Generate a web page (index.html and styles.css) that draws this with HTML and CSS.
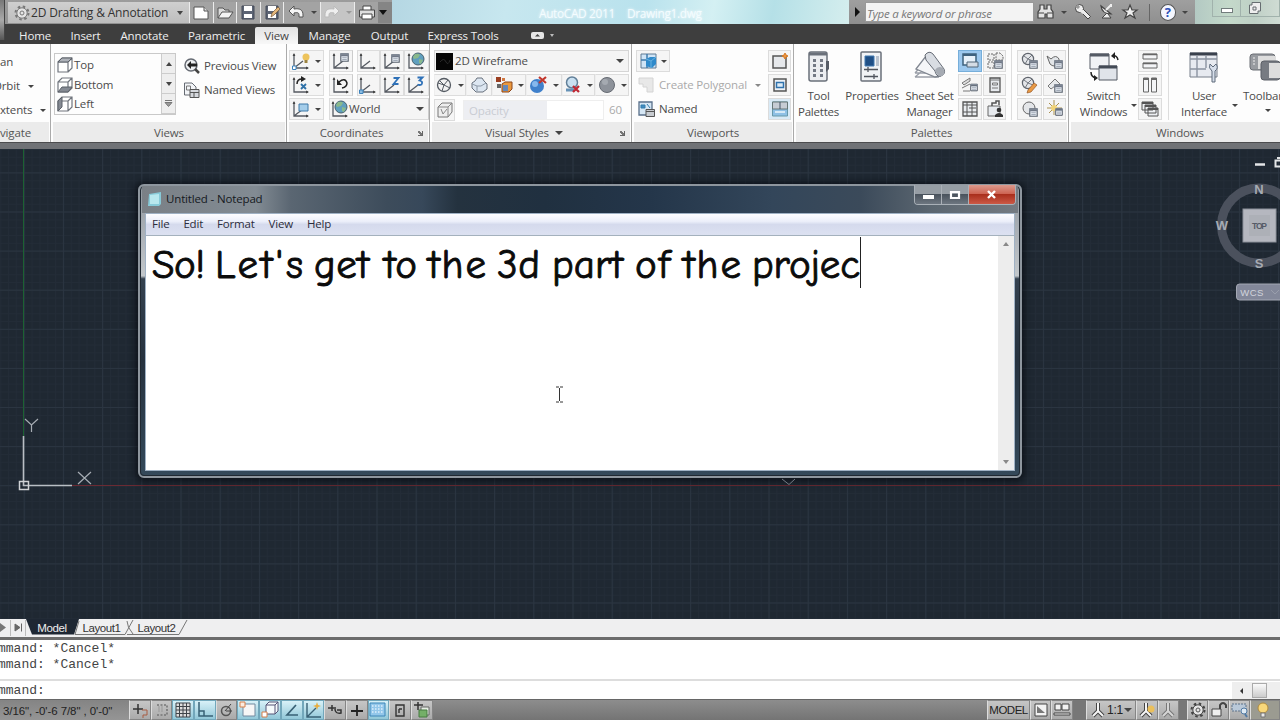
FILE: index.html
```html
<!DOCTYPE html>
<html lang="en">
<head>
<meta charset="utf-8">
<title>AutoCAD 2011</title>
<link rel="stylesheet" href="styles.css">
</head>
<body>
<svg class="defs" width="0" height="0">
  <defs>
    <symbol id="axis" viewBox="0 0 18 18"><path d="M2 2v14h14M2 16L11 9" fill="none" stroke="#555a62" stroke-width="1.3"/><path d="M0.6 4L2 1l1.4 3zM14 14.6l3 1.4-3 1.4z" fill="#444"/></symbol>
    <symbol id="axisb" viewBox="0 0 18 18"><path d="M2 2v14h14" fill="none" stroke="#555a62" stroke-width="1.3"/><path d="M0.6 4L2 1l1.4 3zM14 14.6l3 1.4-3 1.4z" fill="#444"/></symbol>
    <symbol id="globe" viewBox="0 0 14 14"><circle cx="7" cy="7" r="6" fill="#5f9fbe" stroke="#47606e"/><path d="M4 2q4-1 5 1l-2 3-4 1-1-2zM8 7l4 1-2 4-2-1z" fill="#8ab98b"/></symbol>
    <symbol id="sheet" viewBox="0 0 8 8"><path d="M.7.7h6.6v6.6H.7z" fill="#e9eef5" stroke="#59616d"/><path d="M.7 1h6.6v1.6H.7zM2 4.2h4M2 5.8h4" fill="#59616d" stroke="#8b95a3" stroke-width=".7"/></symbol>
    <symbol id="grey-globe" viewBox="0 0 18 18"><circle cx="7" cy="7" r="5.6" fill="#e4e6e9" stroke="#60656d" stroke-width="1.2"/><path d="M3 4l4 3 4-4M7 7l-3 5M7 7l5 2" fill="none" stroke="#747981"/></symbol>
  </defs>
</svg>

<header class="titlebar">
  <div class="qat">
    <div class="workspace">
      <svg width="18" height="18" viewBox="0 0 18 18"><circle cx="9" cy="9" r="6.500" fill="none" stroke="#777" stroke-width="2" stroke-dasharray="2.500 2.600"/><circle cx="9" cy="9" r="5.200" fill="#e4e4e4" stroke="#777"/><circle cx="9" cy="9" r="2" fill="none" stroke="#777"/></svg>
      <span class="ws-name">2D Drafting &amp; Annotation</span><i class="down"></i>
    </div>
    <span class="qb"><svg width="18" height="18"><path d="M2 3h10l4 4v8H2z" fill="#fff" stroke="#555"/><path d="M12 3v4h4" fill="#ddd" stroke="#555"/></svg></span>
    <span class="qb"><svg width="18" height="18"><path d="M2 14V4h5l2 2h4v3" fill="#ddd" stroke="#555"/><path d="M2 14l4-6h11l-4 6z" fill="#f4f4f4" stroke="#555"/></svg></span>
    <span class="qb"><svg width="18" height="18"><path d="M3 2h12v13H3z" fill="#5c6474" stroke="#444b58"/><path d="M5 2h8v5H5zM5 10h8v4H5z" fill="#fff"/></svg></span>
    <span class="qb"><svg width="18" height="18"><path d="M3 2h12v13H3z" fill="#5c6474" stroke="#444b58"/><path d="M5 2h8v5H5zM5 10h8v4H5z" fill="#fff"/><path d="M8 13l1-4 6-6 2 2-6 6z" fill="#e3b77c" stroke="#75583a" stroke-width=".7"/></svg></span>
    <span class="qb wide"><svg width="18" height="18"><path d="M2 7l5-5v3c6-1 9 1 9 6v2h-4v-2c0-2-1-3-5-2v3z" fill="#f5f5f5" stroke="#555"/></svg><i class="down tiny"></i></span>
    <span class="qb wide pale"><svg width="18" height="18"><path d="M16 7l-5-5v3c-6-1-9 1-9 6v2h4v-2c0-2 1-3 5-2v3z" fill="#eee" stroke="#bbb"/></svg><i class="down tiny faint"></i></span>
    <span class="qb print"><svg width="18" height="18"><path d="M5 6V2h8v4" fill="#fff" stroke="#444"/><path d="M1.500 6h15v7h-15z" fill="#ddd" stroke="#444"/><path d="M4 10h10v5H4z" fill="#fff" stroke="#444"/></svg></span>
    <span class="qend"><i class="down black"></i></span>
  </div>
  <div class="glass"><span class="apptitle">AutoCAD 2011</span><span class="apptitle">Drawing1.dwg</span></div>
  <div class="info">
    <i class="right"></i>
    <div class="search">Type a keyword or phrase</div>
    <svg class="binoc" width="18" height="18"><path d="M3 2h4v4h3V2h4v4l2 3v6h-6v-4H8v4H1V9l2-3z" fill="#e4e4e4" stroke="#444" stroke-width="1.2"/><path d="M1 10h6M10 10h6" stroke="#444"/></svg>
    <i class="down tiny dot"></i>
    <svg width="18" height="18"><circle cx="5.500" cy="5.500" r="4" fill="#eee" stroke="#444"/><path d="M7 9l7 7 2.500-2.500-7-7z" fill="#eee" stroke="#444"/><path d="M1 4l3 2 2-2-2-3z" fill="#999"/><path d="M5 6l5 4" stroke="#eee" stroke-width="3"/></svg>
    <svg class="sat" width="18" height="18"><path d="M3 3q1 8 10 8z" fill="#eee" stroke="#444" stroke-width="1.200"/><path d="M8 7l5-5M13 1v3" stroke="#eee" stroke-width="2"/><path d="M8 11l-4 4h9l-3-4" fill="#eee" stroke="#444"/></svg>
    <svg class="star" width="18" height="18"><path d="M9 2l2 5h5l-4 3 2 5-5-3-5 3 2-5-4-3h5z" fill="#eee" stroke="#444" stroke-width="1.2"/></svg>
    <i class="vline"></i>
    <span class="help">?</span>
    <i class="down tiny dot"></i>
  </div>
  <div class="caption"><span class="cbtn"><i class="minline"></i></span><span class="cbtn second"><svg width="14" height="14"><path d="M4 1.500h8.500V10H10v2.500H1.500V4H4z" fill="#eee" stroke="#666d70"/><path d="M5 6h3v3H5z" fill="none" stroke="#666d70"/></svg></span></div>
</header>

<nav class="tabs">
  <span class="t1">Home</span><span class="t2">Insert</span><span class="t3">Annotate</span><span class="t4">Parametric</span><span class="active">View</span><span class="t6">Manage</span><span class="t7">Output</span><span class="t8">Express Tools</span>
  <svg class="ribmode" width="28" height="10"><rect x="1" y="1" width="13" height="7" rx="2" fill="#e6e6e6"/><path d="M5 5.500L7.500 3l2.500 2.500z" fill="#444"/><path d="M20 3h4l-2 3z" fill="#bbb"/></svg>
  <i class="appbtn"></i>
</nav>

<main class="ribbon">
  <section class="panel nav-panel">
    <div class="rows"><div>an</div><div class="more">Orbit<i class="down tiny"></i></div><div class="more">xtents<i class="down tiny"></i></div></div>
    <footer>vigate</footer>
  </section>

  <section class="panel views">
    <div class="body">
      <div class="viewlist">
        <div class="items">
          <div><svg width="18" height="18"><path d="M2 6h10v10H2zM2 6l4-4h10v10l-4 4M12 6l4-4" fill="#fff" stroke="#70757d" stroke-width="1.200"/><path d="M2 6l4-4h10l-4 4z" fill="#aeb2b9" stroke="#5b6068"/></svg>Top</div>
          <div><svg width="18" height="18"><path d="M6 2h10v10l-4 4H2V6zM2 6h10v10M12 6l4-4" fill="#fff" stroke="#70757d" stroke-width="1.200"/><path d="M2 16l4-5h10l-4 5z" fill="#858a93" stroke="#5b6068"/></svg>Bottom</div>
          <div><svg width="18" height="18"><path d="M6 2h10v10l-4 4H2V6zM2 6h10v10M12 6l4-4" fill="#fff" stroke="#70757d" stroke-width="1.200"/><path d="M2 6l4-4v10l-4 4z" fill="#858a93" stroke="#5b6068"/></svg>Left</div>
        </div>
        <div class="spin"><b><i class="up"></i></b><b><i class="down"></i></b><b><svg width="9" height="9"><path d="M1 1.500h7M1 3.500h7l-3.500 4z" fill="#999" stroke="#777"/></svg></b></div>
      </div>
      <div class="viewcmds">
        <div><svg width="18" height="18"><circle cx="8" cy="8" r="6" fill="#eef0f2" stroke="#666b73" stroke-width="1.500"/><path d="M12 12l4 4" stroke="#444" stroke-width="2.500"/><path d="M4 8l4-4v2.500h6v3H8V12z" fill="#222"/></svg><span>Previous View</span></div>
        <div><svg width="18" height="18"><path d="M1.500 14V2H9l4 4v8z" fill="#f3f5f8" stroke="#666b73"/><path d="M3.500 5h4v4h-4z" fill="none" stroke="#777"/><path d="M7 8.500h9v8H7z" fill="#d5d8dd" stroke="#555"/><path d="M7 11.500h9M11 11v5" stroke="#555"/></svg><span>Named Views</span></div>
      </div>
    </div>
    <footer>Views</footer>
  </section>

  <section class="panel coords">
    <div class="coordgrid">
      <span class="btn drop"><svg width="19" height="18"><use href="#axis" width="18" height="18"/><circle cx="14" cy="5" r="3.500" fill="#edc35b"/><path d="M12.500 8h3v3h-3z" fill="#9c8441"/><path d="M.5 14h3.500v3.500H.5z" fill="#fff" stroke="#3d83bd"/></svg><i class="down tiny"></i></span>
      <span class="btn"><svg width="19" height="18"><use href="#axis" width="18" height="18"/><use href="#sheet" x="8" y="0" width="9" height="11"/></svg></span>
      <span class="btn"><svg width="19" height="18"><use href="#axis" width="18" height="18"/></svg></span>
      <span class="btn"><svg width="19" height="18"><use href="#axis" width="18" height="18"/><use href="#sheet" x="8" y="2" width="9" height="9"/></svg></span>
      <span class="btn"><svg width="19" height="18"><use href="#axisb" width="18" height="18"/><use href="#globe" x="4" y="0" width="14" height="14"/></svg></span>

      <span class="btn drop"><svg width="19" height="18"><use href="#axisb" width="18" height="18"/><path d="M5 8q0-5 5-5" fill="none" stroke="#222" stroke-width="1.500"/><path d="M9 0l5 3-5 3z" fill="#222"/><path d="M9 8l5 5M14 8l-5 5" stroke="#2e71a8" stroke-width="1.800"/></svg><i class="down tiny"></i></span>
      <span class="btn"><svg width="19" height="18"><use href="#axisb" width="18" height="18"/><path d="M7 6q6-5 8 1 0 4-5 5" fill="none" stroke="#222" stroke-width="1.500"/><path d="M5 3v6h5z" fill="#222"/></svg></span>
      <span class="btn"><svg width="19" height="18"><use href="#axis" width="18" height="18"/><path d="M.5 14h3.500v3.500H.5z" fill="#8dbce0" stroke="#3d83bd"/></svg></span>
      <span class="btn"><svg width="19" height="18"><use href="#axis" width="18" height="18"/><path d="M10.500 2h5l-5 6h5" fill="none" stroke="#2e71b8" stroke-width="1.800"/></svg></span>
      <span class="btn"><svg width="19" height="18"><use href="#axis" width="18" height="18"/><path d="M10.500 1.500h5l-3 3q4 1 2 4-2 1-4 0" fill="none" stroke="#2e71b8" stroke-width="1.800"/></svg></span>

      <span class="btn drop"><svg width="19" height="18"><use href="#axis" width="18" height="18"/><path d="M7 4h9v7H7z" fill="#a4cdea" stroke="#3d78a8"/></svg><i class="down tiny"></i></span>
      <span class="btn world"><svg width="18" height="18"><use href="#axisb" width="18" height="18"/><use href="#globe" x="3" y="0" width="14" height="14"/></svg>World<i class="down"></i></span>
    </div>
    <footer class="with-launch">Coordinates<i class="launch"></i></footer>
  </section>

  <section class="panel visual">
    <div class="rows">
      <div class="combo"><svg width="17" height="17"><path d="M0 0h17v17H0z" fill="#050505"/><path d="M4 9q4-5 6 0 2 4 4-2" fill="none" stroke="#292929"/></svg><span>2D Wireframe</span><i class="down"></i></div>
      <div class="tools">
        <span class="btn"><svg width="17" height="18"><circle cx="8" cy="9" r="6.500" fill="#f3f3f3" stroke="#555b63" stroke-width="1.300"/><path d="M2 7l6 2 4-5M8 9l-2 6M8 9l6 3M4 5l4 4" fill="none" stroke="#555b63"/></svg><i class="down tiny"></i></span>
        <span class="btn"><svg width="18" height="18"><path d="M2 7l3-2 2-3h5l2 3 3 3v5l-4 3H6l-4-4z" fill="#dce6f1" stroke="#68717d"/><path d="M2 8l5 2 4 0 5-3M7 10v5" fill="none" stroke="#8c98a6"/></svg></span>
        <span class="btn"><svg width="18" height="18"><path d="M1 1h5v5H1z" fill="#9b3e20"/><path d="M7 2h3v3H7z" fill="#d17841"/><path d="M2 8h4v4H2z" fill="#666"/><path d="M7 8l3-2h7v7l-3 3H7z" fill="#eb993e" stroke="#8b461c"/><path d="M8 9h5v6H8z" fill="#6588b8"/></svg><i class="down tiny"></i></span>
        <span class="btn"><svg width="19" height="18"><circle cx="8" cy="10" r="7" fill="#3f80cb"/><circle cx="6" cy="8" r="3" fill="#87b8ed"/><path d="M10 1l7 6M17 1l-7 6" stroke="#c2372d" stroke-width="2.200"/></svg><i class="down tiny"></i></span>
        <span class="btn"><svg width="18" height="18"><circle cx="8" cy="6.500" r="5.500" fill="#c9e0f1" stroke="#617f98" stroke-width="1.500"/><path d="M2 14h8" stroke="#6692b7" stroke-width="3"/><path d="M9 10l6 6M15 10l-6 6" stroke="#be2833" stroke-width="2.300"/></svg><i class="down tiny"></i></span>
        <span class="btn"><svg width="18" height="18"><circle cx="9" cy="9" r="7.500" fill="#8d929a" stroke="#666b73"/><circle cx="7" cy="6" r="3" fill="#a5aab1"/></svg><i class="down tiny"></i></span>
      </div>
      <div class="opacity"><span class="btn"><svg width="18" height="18"><path d="M2 6l4-4h10v9l-4 5H2z" fill="#eee" stroke="#777"/><path d="M2 6h10v10M12 6l4-4M5 8l2 5 4-5" fill="none" stroke="#888"/></svg></span><div class="slider">Opacity</div><span class="num">60</span></div>
    </div>
    <footer class="with-launch"><span>Visual Styles</span><i class="down vsdown"></i><i class="launch"></i></footer>
  </section>

  <section class="panel viewports">
    <div class="body">
      <div class="rows vpleft">
        <div><span class="btn"><svg width="18" height="18"><path d="M1 2h15v14H1z" fill="#cfe4f6" stroke="#5e7a94"/><path d="M1 8h6M7 2v14" stroke="#3f79ab" stroke-width="1.500"/><path d="M6 7l4-2h6v7l-4 4-6-2z" fill="#2f8acb"/><path d="M6 7l5 2 5-4M11 9v7" fill="none" stroke="#67b1e0"/></svg><i class="down tiny"></i></span></div>
        <div class="disabled"><svg width="18" height="18"><path d="M1 2h14v14H9v-5H5V8H1z" fill="#e8e8e8" stroke="#d4d4d4"/></svg><span class="cpoly">Create Polygonal</span><i class="down tiny"></i></div>
        <div><svg width="18" height="18"><path d="M1 2h13v13H1z" fill="#d6e7f5" stroke="#59708a" stroke-width="1.300"/><path d="M3 5h4v3H3zM9 4l3 4" fill="#428bc1" stroke="#337eae"/><path d="M8 9.500h8.500v7H8z" fill="#c8ccd1" stroke="#555"/><path d="M8 11.500h8" stroke="#555"/></svg><span>Named</span></div>
      </div>
      <div class="rows vpright">
        <span class="btn"><svg width="18" height="18"><path d="M2 4h13v12H2z" fill="#e6e8eb" stroke="#555" stroke-width="1.500"/><path d="M14 1l1 2 2 1-2 1-1 2-1-2-2-1 2-1z" fill="#ed953e" stroke="#d77a24"/></svg></span>
        <span class="btn"><svg width="18" height="18"><path d="M3 3h12v12H3z" fill="#edf2f7" stroke="#555" stroke-width="1.500"/><path d="M5.500 6.500h7v5h-7z" fill="#dcebf6" stroke="#2f72ad" stroke-width="1.500"/></svg></span>
        <span class="btn sel"><svg width="18" height="18"><path d="M1.500 2h15v14h-15z" fill="#8fc1e6" stroke="#69a"/><path d="M1.500 2h15v7h-15z" fill="#c6ccd4" stroke="#677"/><path d="M9 2v7" stroke="#456"/><path d="M4 12h10" stroke="#d6e9f6" stroke-width="2"/></svg></span>
      </div>
    </div>
    <footer>Viewports</footer>
  </section>

  <section class="panel palettes">
    <div class="body">
      <div class="big p1"><svg width="28" height="32"><rect x="4" y="1" width="18" height="29" rx="2" fill="#eceef1" stroke="#6a707a" stroke-width="1.500"/><path d="M4 3h18" stroke="#6a707a" stroke-width="3"/><g fill="#737984"><path d="M8 8h3v3H8zM15 8h3v3h-3zM8 13h3v3H8zM15 13h3v3h-3zM8 18h3v3H8zM15 18h3v3h-3zM8 23h3v3H8zM15 23h3v3h-3z"/></g><path d="M21 10h3v8l-3 3z" fill="#555b65"/></svg><span>Tool<br>Palettes</span></div>
      <div class="big p2"><svg width="28" height="32"><rect x="3" y="1" width="20" height="29" rx="1" fill="#f1f3f6" stroke="#6a707a" stroke-width="1.500"/><path d="M7 5h9v10H7z" fill="#1f4f86" stroke="#427bb1"/><path d="M18 5h3v10h-3z" fill="#b9c2ce"/><path d="M6 18.500h14M6 25.500h14M10 16v5M16 23v5" stroke="#50555e" stroke-width="1.300"/></svg><span>Properties</span></div>
      <div class="big p3"><svg width="34" height="32"><path d="M2 26h24M2 22h20M2 26l6-5M2 22l8-9" fill="none" stroke="#9a9fa8" stroke-width="1.300"/><path d="M3 18l10-13 14 20-5 1z" fill="#f5f6f8" stroke="#818791" stroke-width="1.300"/><path d="M12 4q4-5 8-1l11 15q2 5-3 7-5 1-6-5L13 9z" fill="#d9dde3" stroke="#666c76"/><path d="M22 19q3-5 8-2 3 5-1 8-6 0-7-6" fill="#a6abb3"/></svg><span>Sheet Set<br>Manager</span></div>
      <div class="pgrid">
        <span class="btn on"><svg width="18" height="18"><path d="M2 2h13v11H2z" fill="#e7f1fa" stroke="#3e617e" stroke-width="1.500"/><path d="M2 3h13" stroke="#3e617e" stroke-width="2"/><path d="M6 10h11v5H6z" fill="#d4dce5" stroke="#526679"/></svg></span>
        <span class="btn"><svg width="18" height="18"><path d="M2 2h6v6H2zM2 10h6v6H2zM10 1h4l3 3v4h-7z" fill="#eee" stroke="#666" stroke-dasharray="2 1"/><use href="#sheet" x="8" y="8" width="9" height="9"/></svg></span>
        <span class="btn"><svg width="18" height="18"><path d="M1 7l8-5v3L3 9zM1 12l8-4M2 15h7" fill="#ddd" stroke="#777"/><use href="#sheet" x="9" y="6" width="8" height="11"/></svg></span>
        <span class="btn"><svg width="18" height="18"><path d="M4 2h10v14H4z" fill="#e7eaee" stroke="#555" stroke-width="1.300"/><path d="M4 4h10M6.500 7h5v2h-5zM6 12h6" fill="none" stroke="#777"/></svg></span>
        <span class="btn"><svg width="18" height="18"><path d="M2 2h14v14H2z" fill="#e9ecef" stroke="#555" stroke-width="1.300"/><path d="M2 5h14M6 2v14M11 2v14M2 12h14M8 8h7" stroke="#555"/></svg></span>
        <span class="btn"><svg width="18" height="18"><path d="M2 6h12v10H2z" fill="#e7eaee" stroke="#666"/><path d="M6 6V3h4V1h3v4" fill="none" stroke="#555" stroke-width="1.500"/><circle cx="13" cy="10" r="2.300" fill="#333"/><path d="M9 17v-2q4-4 8 0v2z" fill="#333"/></svg></span>
      </div>
      <div class="pgrid second">
        <span class="btn"><svg width="18" height="18"><use href="#grey-globe" width="18" height="18"/><use href="#sheet" x="8" y="8" width="9" height="9"/></svg></span>
        <span class="btn"><svg width="18" height="18"><path d="M1 4l4 3q5-5 8 0v5q-5 4-9 0z" fill="#e2e5e8" stroke="#666"/><use href="#sheet" x="8" y="8" width="9" height="9"/></svg></span>
        <span class="btn"><svg width="18" height="18"><use href="#grey-globe" width="18" height="18"/><path d="M7 14l6-7 3 2-6 7-4 1z" fill="#e99a45" stroke="#965826" stroke-width=".7"/></svg></span>
        <span class="btn"><svg width="18" height="18"><path d="M2 10l7-7 5 5-3 2M2 10l3 3 4-3" fill="#e8eaec" stroke="#777"/><use href="#sheet" x="8" y="8" width="9" height="9"/></svg></span>
        <span class="btn"><svg width="18" height="18"><circle cx="8" cy="8" r="6" fill="#e4e6e9" stroke="#666"/><use href="#sheet" x="8" y="8" width="9" height="9"/></svg></span>
        <span class="btn"><svg width="18" height="18"><path d="M8 0v15M1 8h15M3 3l10 10M13 3L3 13" stroke="#a99150"/><circle cx="8" cy="8" r="3" fill="#f1d377"/><use href="#sheet" x="9" y="7" width="8" height="10"/></svg></span>
      </div>
    </div>
    <footer>Palettes</footer>
  </section>

  <section class="panel windows">
    <div class="body">
      <div class="big w1"><svg width="34" height="32"><path d="M3 3h19v15H3z" fill="#f0f2f5" stroke="#555b65"/><path d="M3 4h19" stroke="#555b65" stroke-width="3"/><path d="M12 15h18v14H12z" fill="#e0e4ea" stroke="#555b65"/><path d="M12 16h18" stroke="#444b56" stroke-width="3"/><path d="M26 5q4-1 5 4M4 21q0 5 5 6" fill="none" stroke="#222" stroke-width="1.500"/><path d="M28 1l-4 4 4 3zM7 24l4 3-4 3z" fill="#222"/></svg><span>Switch<br>Windows</span><i class="down tiny corner"></i></div>
      <div class="wcol">
        <span class="btn"><svg width="18" height="18"><path d="M2 2h14v5H2zM2 11h14v5H2z" fill="#f4f5f7" stroke="#666"/><path d="M2 2.500h14M2 11.500h14" stroke="#666" stroke-width="1.600"/></svg></span>
        <span class="btn"><svg width="18" height="18"><path d="M2.500 2h5v14h-5zM10.500 2h5v14h-5z" fill="#f4f5f7" stroke="#666"/><path d="M2.500 3h5M10.500 3h5" stroke="#666" stroke-width="2"/></svg></span>
        <span class="btn"><svg width="18" height="18"><path d="M1 2h11v8H1zM4 5h11v8H4zM7 8h10v8H7z" fill="#eef0f3" stroke="#555"/><path d="M1 3h11M4 6h11M7 9h10" stroke="#555" stroke-width="2"/></svg></span>
      </div>
      <div class="big w2"><svg width="34" height="32"><path d="M3 2h27v24H3z" fill="#e7eaf0" stroke="#777e8a"/><path d="M3 3h27" stroke="#3a414d" stroke-width="3"/><path d="M3 8h27M10 5v21M19 5v12M3 18h16" stroke="#8b93a0" stroke-width="1.400"/><path d="M25 31v-11q-4-3-2-7l3 3 3-3q3 4-1 7v11z" fill="#d6deea" stroke="#5e6a7b"/></svg><span>User<br>Interface</span><i class="down tiny corner"></i></div>
      <div class="big w3"><svg width="34" height="32"><rect x="3" y="3" width="25" height="16" rx="3" fill="#989ba0" stroke="#6b6e74"/><path d="M11 5h18v13H11z" fill="#ddd"/><path d="M6 7h2M6 10h2M6 13h2" stroke="#eee"/><rect x="14" y="10" width="19" height="19" rx="3" fill="#777b82" stroke="#5b5f66"/><path d="M22 12h12v15H22z" fill="#ddd"/></svg><span>Toolbars</span><i class="down tiny"></i></div>
    </div>
    <footer>Windows</footer>
  </section>
</main>

<div class="drawing">
  <svg class="grid" width="1280" height="470">
    <defs>
      <pattern id="minor" x="23.7" y="23.5" width="7.84" height="7.82" patternUnits="userSpaceOnUse"><path d="M0 .5H8M.5 0V8" stroke="#232c37"/></pattern>
      <pattern id="major" x="23.7" y="23.4" width="39.2" height="39.1" patternUnits="userSpaceOnUse"><path d="M0 .5H40M.5 0V40" stroke="#2b3541"/></pattern>
    </defs>
    <rect width="1280" height="470" fill="url(#minor)"/><rect width="1280" height="470" fill="url(#major)"/>
    <path d="M23.500 0v288" stroke="#1c6232"/><path d="M72 336.500h1208" stroke="#6b2a33"/>
    <path d="M23.500 287v49.500H72" fill="none" stroke="#b9bec4" stroke-width="1.600"/><path d="M19.500 332.500h9v8h-9z" fill="none" stroke="#d0d3d6" stroke-width="1.500"/>
    <path d="M25 270l6.500 6 6.500-6M31.500 276v7M78 323l13 12M91 323l-13 12" fill="none" stroke="#a6acb3" stroke-width="1.200"/>
    <circle cx="1259" cy="76.500" r="37.500" fill="none" stroke="#4b515d" stroke-width="9"/>
    <rect x="1243" y="60" width="33" height="33" fill="#b5b7bf" stroke="#8e929b"/><rect x="1249" y="66" width="21" height="21" fill="#adb0b7"/>
    <path d="M1255 15.500h10" stroke="#e4e6e8" stroke-width="2.500"/><path d="M1275.500 11.500h6v6h-6zM1277 9h4" fill="none" stroke="#e4e6e8" stroke-width="2"/>
    <rect x="1236.500" y="135" width="50" height="16" rx="3" fill="#83889a" stroke="#a4a8b4"/><path d="M1271 141l4 4 4-4" fill="none" stroke="#999eac"/>
    <g class="cube"><text x="1259" y="45">N</text><text x="1222" y="81">W</text><text x="1259" y="119">S</text><text class="top" x="1259.500" y="80" textLength="15">TOP</text><text class="wcs" x="1252" y="147">WCS</text></g>
  </svg>

  <div class="notepad">
    <div class="np-title"><svg width="16" height="16"><path d="M2 3l12-2v12l-2 2H1z" fill="#88cbd9"/><path d="M3 4l9-1v10H3z" fill="#b9e8ee"/></svg><span>Untitled - Notepad</span>
      <div class="np-btns"><b><i></i></b><b><svg width="12" height="10"><path d="M2 2h8v6H2z" fill="none" stroke="#fff" stroke-width="2.200"/></svg></b><b class="close"><svg width="12" height="12"><path d="M2 2l7 7M9 2L2 9" stroke="#fff" stroke-width="2.400"/></svg></b></div>
    </div>
    <div class="np-inner">
      <div class="np-menu"><span>File</span><span>Edit</span><span>Format</span><span>View</span><span>Help</span></div>
      <div class="np-body">
        <svg class="np-text" width="852" height="234">
          <text y="42"><tspan x="6" textLength="53">So!</tspan> <tspan x="69" textLength="88">Let's</tspan> <tspan x="168" textLength="55">get</tspan> <tspan x="238" textLength="33">to</tspan> <tspan x="282" textLength="58">the</tspan> <tspan x="351" textLength="43">3d</tspan> <tspan x="406" textLength="71">part</tspan> <tspan x="489" textLength="35">of</tspan> <tspan x="537" textLength="58">the</tspan> <tspan x="606" textLength="108">projec</tspan></text>
          <path d="M714.500 1v51" stroke="#222"/>
          <path d="M410 151h3M414 151h3M413.500 152v13M410 166h3M414 166h3" stroke="#333" fill="none"/>
        </svg>
        <div class="np-scroll"><i class="up"></i><i class="down"></i></div>
      </div>
    </div>
  </div>
  <svg class="cursor-tip" width="16" height="8"><path d="M1 1l7 5.500L14 1" fill="none" stroke="#747b84"/></svg>
</div>

<div class="layouts">
  <svg width="200" height="18"><path d="M0 4l6 4.500L0 13z" fill="#777"/><path d="M10.500 1v16M25.500 1v16" stroke="#bbb"/><path d="M15 5l5 3.500-5 3.500zM21.500 4.500v8" fill="#666" stroke="#666"/><path d="M26 0l6 15.500h42L79 0z" fill="#1e2733"/><path d="M79 2l-4 13.500h50L133 1M127 15.500h52L187 1M127 2q0 6 6 13" fill="none" stroke="#777"/>
  <g><text class="lm" x="52" y="12.500">Model</text><text x="101.500" y="12.500" textLength="38">Layout1</text><text x="156.500" y="12.500" textLength="38">Layout2</text></g></svg>
</div>
<div class="command"><div class="history"><p>mmand: *Cancel*</p><p>mmand: *Cancel*</p></div><div class="prompt"><p>mmand:</p><div class="hscroll"><i class="left"></i><b></b></div></div></div>

<footer class="status">
  <div class="readout">3/16", -0'-6 7/8" , 0'-0"</div>
  <div class="toggles">
    <span><svg width="18" height="18"><path d="M2 8h10M7 3v10" stroke="#333" stroke-width="1.500"/><path d="M11 9h5v5h-4v3" fill="none" stroke="#a85c42"/></svg></span>
    <span><svg width="18" height="18"><path d="M4 4h10v10H4" fill="none" stroke="#777" stroke-width="1.600" stroke-dasharray="2 1.500"/><path d="M6 5v6M9 5v6" stroke="#999"/></svg></span>
    <span class="lit"><svg width="18" height="18"><path d="M2 2h14v14H2zM5.500 2v14M9 2v14M12.500 2v14M2 5.500h14M2 9h14M2 12.500h14" fill="#ddd" stroke="#3e4348"/></svg></span>
    <span class="lit"><svg width="18" height="18"><path d="M3 1v14h14M3 10h5v5" fill="none" stroke="#396175" stroke-width="1.500"/></svg></span>
    <span><svg width="18" height="18"><circle cx="8" cy="10" r="4.500" fill="none" stroke="#555" stroke-width="1.500"/><path d="M7 10l6-7M8 10h6" stroke="#444"/></svg></span>
    <span class="lit"><svg width="18" height="18"><path d="M4 3h12v12H4z" fill="#f6f6f6" stroke="#738aa0"/><path d="M1 1h5v5H1z" fill="#fbece0" stroke="#d6804d"/></svg></span>
    <span class="lit"><svg width="18" height="18"><path d="M5 4l3-3h9v9l-3 3H5zM5 4h9v9M14 4l3-3" fill="#f5fafc" stroke="#557"/><path d="M1 11h5v5H1z" fill="#fff" stroke="#d6804d"/></svg></span>
    <span class="lit"><svg width="18" height="18"><path d="M13 4L4 14h11" fill="none" stroke="#396175" stroke-width="1.700"/></svg></span>
    <span class="lit"><svg width="18" height="18"><path d="M3 2v14h14M3 16l9-9" fill="none" stroke="#396175" stroke-width="1.400"/><path d="M13 1l1 3 3 1-3 1-1 3-1-3-3-1 3-1z" fill="#e9ae3e"/></svg></span>
    <span><svg width="18" height="18"><path d="M2 7h8M6 4v6M9 8q0 5 6 4v-3h-4" fill="none" stroke="#333" stroke-width="1.500"/></svg></span>
    <span><svg width="18" height="18"><path d="M3 10h12M9 4v11" stroke="#222" stroke-width="1.800"/></svg></span>
    <span class="lit"><svg width="18" height="18"><path d="M1 2h15v13H1z" fill="#93c7ea" stroke="#3d86b8"/><path d="M3 5h11M3 8h11M3 11h11" stroke="#def0fb" stroke-width="1.500" stroke-dasharray="1.500 1.500"/></svg></span>
    <span><svg width="18" height="18"><path d="M5 4h8v11H5zM8 8h3M8 8v4" fill="none" stroke="#333" stroke-width="1.400"/></svg></span>
    <span><svg width="18" height="18"><path d="M1 4h9M5 1v8" stroke="#333" stroke-width="1.500"/><path d="M8 6h8v8H8z" fill="#e5ede3" stroke="#666"/><path d="M6 9h8v7H6z" fill="#74af68" stroke="#477b40"/></svg></span>
  </div>
  <div class="status-right">
    <span class="model">MODEL</span>
    <span class="s21"><svg width="18" height="18"><path d="M3 3h12v12H3z" fill="#f2f2f2" stroke="#444"/><path d="M5 5v7h8z" fill="#777"/></svg></span>
    <span class="s22"><svg width="18" height="18"><path d="M2 3h6v6H2zM9 3h7v6H9zM1 12h16v2H1z" fill="#f2f2f2" stroke="#444"/></svg></span>
    <i class="dark13"></i>
    <span class="scale"><svg width="16" height="18"><path d="M8 2v8L3 15M8 10l5 5" fill="none" stroke="#444" stroke-width="4"/><path d="M8 2v8L3 15M8 10l5 5" fill="none" stroke="#f5f5f5" stroke-width="2"/></svg>1:1<i class="down"></i></span>
    <span class="s22"><svg width="18" height="18"><path d="M8 2v8L3 15M8 10l5 5" fill="none" stroke="#444" stroke-width="4"/><path d="M8 2v8L3 15M8 10l5 5" fill="none" stroke="#f5f5f5" stroke-width="2"/><circle cx="13" cy="8" r="3.500" fill="#ebc05b"/></svg></span>
    <span class="s21"><svg width="18" height="18"><path d="M8 2v8L3 15M8 10l5 5" fill="none" stroke="#777" stroke-width="4"/><path d="M8 2v8L3 15M8 10l5 5" fill="none" stroke="#d5d5d5" stroke-width="2"/></svg></span>
    <i class="dark8"></i>
    <span class="s21"><svg width="18" height="18"><circle cx="9" cy="9" r="6.500" fill="none" stroke="#444" stroke-width="2" stroke-dasharray="2.500 2.600"/><circle cx="9" cy="9" r="5.200" fill="#e6e6e6" stroke="#444"/><circle cx="9" cy="9" r="2" fill="none" stroke="#555"/></svg></span>
    <span class="s21"><svg width="18" height="18"><path d="M2 8h9v7H2z" fill="#eee" stroke="#444"/><path d="M10 8V4q3-4 6 0v3" fill="none" stroke="#444" stroke-width="2"/></svg></span>
    <span class="s21"><svg width="18" height="18"><path d="M1 3h14v7H1z" fill="#b9c8d8" stroke="#5f7389" stroke-dasharray="2 1"/><circle cx="13" cy="10" r="3" fill="#dfeaf4" stroke="#527aa3"/><path d="M14 13l2 3" stroke="#527aa3" stroke-width="2"/></svg></span>
    <span class="bulb"><svg width="18" height="18"><circle cx="9" cy="7" r="5" fill="#f8d77a" stroke="#b08b3e"/><path d="M7 12h4v4H7z" fill="#e8e8e8" stroke="#777"/></svg></span>
  </div>
</footer>
</body>
</html>
```
FILE: styles.css
```css
* { box-sizing: border-box; }
html { overflow: hidden; }
body { margin: 0; width: 1280px; height: 720px; overflow: hidden; display: flex; flex-direction: column; background: #1f2833; font: 11.5px/16px "Open Sans", "Noto Sans", sans-serif; color: #4b4b4b; letter-spacing: -0.15px; }
svg { flex: none; display: block; }
p { margin: 0; }
i { font-style: normal; flex: none; }
.defs { position: absolute; }

.down, .up { display: block; width: 0; height: 0; border: 4px solid transparent; border-bottom: 0; border-top-color: #444; }
.up { border: 4px solid transparent; border-top: 0; border-bottom-color: #444; }
.tiny { border-width: 3px; border-bottom: 0; }
.black { border-width: 5px 4px 0; border-top-color: #111; }
.faint { border-top-color: #999; }
.right { border: 5px solid transparent; border-left-color: #111; border-right: 0; }
.left { border: 3px solid transparent; border-right-color: #333; border-left: 0; }

/* title bar */
.titlebar { flex: none; height: 24px; display: flex; background: #9c9c9c; overflow: hidden; }
.qat { width: 392px; flex: none; display: flex; background: linear-gradient(#9c9c9c, #929292); padding: 2px 0 1px 8px; }
.workspace { width: 181px; display: flex; align-items: center; background: linear-gradient(#cfcfcf, #bdbdbd); padding-left: 5px; }
.ws-name { width: 146px; color: #333; font-size: 12px; letter-spacing: -0.18px; white-space: nowrap; padding-top: 1px; }
.workspace .down { border-width: 4px 3px 0; }
.qb { width: 23.500px; display: flex; align-items: center; justify-content: center; background: #a3a3a3; border-left: 1px solid #ececec; }
.qb.wide { width: 37px; justify-content: space-around; }
.qb.wide.pale { width: 34px; background: #c5c5c5; }
.qb.print { width: 24px; }
.qend { flex: 1; background: #858585; display: flex; align-items: center; padding-left: 1px; }
.glass { width: 457px; display: flex; align-items: center; gap: 12px; padding-left: 147px; background: linear-gradient(100deg, #b5d7e3 0%, #c7e7ef 25%, #b9e2ed 55%, #d4f0f3 70%, #b5e0e7 83%, #d5eeee 100%); }
.apptitle { color: #f4fcff; font-size: 11.800px; letter-spacing: -0.3px; padding-top: 2px; text-shadow: 0 0 3px #fff; }
.info { width: 346px; flex: none; display: flex; align-items: center; padding-left: 6px; background: linear-gradient(#9f9f9f, #8f8f8f); }
.search { margin-left: 5px; width: 176px; height: 20px; background: #f3f3f3; border: 1px solid #999; padding: 2px 0 0 1px; font-style: italic; line-height: 18px; color: #777; letter-spacing: -0.24px; white-space: nowrap; }
.binoc { margin-left: 3px; }
.dot { margin: 0 7px 0 6px; }
.sat { margin-left: 6px; }
.star { margin-left: 5px; }
.vline { width: 1px; height: 17px; background: #666; margin: 0 10px 0 10px; }
.help { width: 17px; height: 17px; border-radius: 50%; background: #f5f7ff; border: 1px solid #555; color: #2c50b8; font-weight: bold; font-size: 13px; line-height: 15px; text-align: center; }
.caption { flex: 1; display: flex; padding-left: 17px; background: linear-gradient(90deg, #b3c9c3, #c4d9ca 40%, #bfd0c6 70%, #d0dcd4); }
.cbtn { width: 29px; height: 17px; border: 1px solid #a1b2ac; border-top: 0; display: flex; align-items: center; justify-content: center; }
.cbtn.second { flex: 1; border-left: 0; padding-right: 10px; }
.minline { width: 12px; height: 5px; border: 1px solid #727c7c; background: #fff; margin-top: 4px; }

/* ribbon tabs */
.tabs { flex: none; height: 20px; display: flex; background: #3e3e3e; color: #eee; line-height: 17px; padding: 3px 0 0 5px; position: relative; white-space: nowrap; }
.tabs span { text-align: center; flex: none; height: 17px; }
.t1 { width: 60px; } .t2 { width: 41px; } .t3 { width: 77px; } .t4 { width: 67px; }
.tabs .active { width: 43px; margin: 0 0 0 5px; background: linear-gradient(#e2e2e2, #f8f8f8); color: #444; border-radius: 2px 2px 0 0; }
.t6 { width: 63px; } .t7 { width: 57px; } .t8 { width: 90px; }
.ribmode { margin: 4px 0 0 22px; }
.appbtn { position: absolute; left: 0; top: -24px; width: 5px; height: 40px; background: linear-gradient(#777, #aaa 50%, #555); border-right: 1px solid #444; }

/* ribbon */
.ribbon { flex: none; height: 105px; display: flex; overflow: hidden; background: #fdfdfd; border-bottom: 6px solid #707276; box-shadow: inset 0 -1px #4c4c4e; }
.panel { flex: none; height: 98px; border-right: 1px solid #aaa; display: flex; flex-direction: column; overflow: hidden; white-space: nowrap; }
.panel > footer { flex: none; height: 20px; margin: auto 1px 0 2px; background: #ebebeb; display: flex; align-items: center; justify-content: center; position: relative; color: #555; padding-top: 1px; }
.panel > .with-launch { padding-right: 14px; }
.body { display: flex; }
.rows { display: grid; grid-template-rows: repeat(3, 22px); row-gap: 2px; padding-top: 6px; align-items: center; }
.rows > div { display: flex; align-items: center; }
.btn { height: 22px; display: flex; align-items: center; justify-content: center; background: #f5f5f5; border: 1px solid #dcdcdc; gap: 4px; }
.launch { position: absolute; right: 5px; bottom: 6px; width: 5px; height: 5px; border-right: 1px solid #666; border-bottom: 1px solid #666; background: linear-gradient(45deg, transparent 35%, #777 35% 65%, transparent 65%); }

.nav-panel { width: 51px; }
.nav-panel > footer { justify-content: flex-start; margin-left: 0; }
.nav-panel .rows > div { height: 22px; padding-top: 2px; }
.nav-panel .more { gap: 8px; }
.nav-panel .more:nth-child(2) { margin-left: -7px; }
.nav-panel .more:nth-child(3) { margin-left: 0; }

.views { width: 236px; }
.viewlist { width: 122px; height: 62px; margin: 9px 0 0 3px; border: 1px solid #c9c9c9; display: flex; }
.items { width: 106px; padding: 1px 0 0 1px; }
.items div { height: 19.500px; display: flex; align-items: center; gap: 0; padding-top: 1px; }
.spin { flex: 1; display: flex; flex-direction: column; }
.spin b { flex: 1; background: #eee; border-left: 1px solid #ccc; border-bottom: 1px solid #ccc; display: flex; align-items: center; justify-content: center; }
.spin .down, .spin .up { border-left-width: 3px; border-right-width: 3px; }
.viewcmds { padding: 10px 0 0 7px; display: grid; grid-template-rows: 24px 24px; }
.viewcmds div { display: flex; align-items: center; gap: 3px; }

.coords { width: 143px; }
.coordgrid { display: grid; grid-template: repeat(3, 22px) / 35px 29px 27px 24px 25px; gap: 2px 0; padding: 6px 0 0 2px; width: 143px; }
.coordgrid .btn:nth-child(5n+2) { margin-left: 5px; border-right-color: #ccc; }
.coordgrid .btn:nth-child(5n+3) { margin-left: 4px; }
.coordgrid .world { grid-column: 2 / -1; justify-content: flex-start; gap: 0; padding-left: 1px; }
.world .down { margin: 0 4px 0 auto; }

.visual { width: 202px; }
.visual .rows { padding-left: 4px; }
.combo { width: 195px; height: 22px; background: #f4f4f4; border: 1px solid #d5d5d5; gap: 2px; padding: 0 4px 0 1px; }
.combo .down { margin-left: auto; }
.tools { width: 195px; display: grid !important; grid-template-columns: 32px 26px 34px 36px 33px 34px; }
.tools .btn { gap: 5px; border-left-color: #eee; }
.opacity { padding-top: 2px; }
.opacity .btn { width: 21px; }
.slider { margin-left: 8px; width: 141px; height: 20px; border: 1px solid #eee; background: linear-gradient(90deg, #edeef2 60%, #fff 60%); color: #c9ccd3; padding-left: 5px; line-height: 19px; }
.num { color: #aaa; padding-left: 5px; }
.vsdown { margin-left: 6px; }

.viewports { width: 162px; }
.vpleft { width: 136px; padding-left: 4px; }
.vpleft > div { gap: 3px; padding-left: 2px; }
.vpleft > div:first-child { padding-left: 0; }
.vpleft .btn { width: 34px; gap: 3px; }
.disabled { color: #aaa; }
.disabled .tiny { border-top-color: #888; margin-left: 5px; }
.vpright { width: 23px; }
.btn.sel { background: #d9eaf6; }

.palettes { width: 275px; }
.big { display: flex; flex-direction: column; align-items: center; text-align: center; padding-top: 7px; position: relative; flex: none; line-height: 16px; }
.big span { margin-top: 5px; letter-spacing: -0.22px; }
.p1 { width: 49px; } .p2 { width: 58px; } .p3 { width: 57px; }
.pgrid { display: grid; grid-template: repeat(3, 22px) / 24px 23px; gap: 2px 1px; padding: 6px 5px 0 0; border-right: 1px solid #ddd; height: 76px; }
.pgrid.second { border: 0; padding-left: 5px; padding-right: 0; grid-template-columns: 25px 23px; }
.btn.on { background: #9cc8ee; border-color: #76aeda; }
.windows { width: 211px; border: 0; }
.windows > footer { width: 300px; padding-right: 82px; }
.w1 { width: 69px; } .w2 { width: 70px; } .w3 { width: 41px; align-items: flex-start; }
.w3 svg { margin-left: 8px; }
.w3 .down { margin: 5px 0 0 26px; }
.w3 span { margin-left: 4px; text-align: left; }
.corner { position: absolute; right: 1px; top: 60px; }
.wcol { width: 31px; border-right: 1px solid #ddd; padding: 6px 6px 0 0; display: grid; grid-template-rows: repeat(3, 22px); gap: 2px; height: 76px; }

/* model space */
.drawing { flex: none; height: 470px; position: relative; background: #1f2832; }
.cube { font-family: "Liberation Sans", sans-serif; font-size: 13px; font-weight: bold; fill: #a6abb3; text-anchor: middle; letter-spacing: 0; }
.cube .top { font-size: 8.500px; fill: #555b67; }
.cube .wcs { font-size: 9.500px; fill: #d2d4dc; font-weight: normal; letter-spacing: .4px; }
.cursor-tip { position: absolute; left: 781px; top: 329px; }

/* notepad window */
.notepad { position: absolute; left: 138px; top: 35px; width: 884px; height: 294px; border: 2px solid #8e969e; outline: 1px solid #202932; outline-offset: -3px; border-radius: 6px; padding: 0 5px 5px; background: linear-gradient(#8f979e, #a9afb5 15%, #c2c7cb 31%, #34414f 32%, #26323f 60%, #34495a); box-shadow: 0 1px 7px 3px rgba(6, 9, 15, .65); }
.np-title { height: 27px; margin: 0 -3px; padding: 0 0 2px 5px; display: flex; align-items: center; gap: 3px; color: #15191e; position: relative; background: linear-gradient(90deg, #7a8086 0, #828b93 13%, #5a6672 17%, #3d4c5b 28%, #37485a 32%, #24323f 36%, #203040 46%, #24364a 58%, #33465a 72%, #3b4a5a 82%, #5b6670 90%, #747b82 100%); }
.np-btns { position: absolute; right: 2px; top: -1px; display: flex; border: 1px solid #a9b0b7; border-top: 0; border-radius: 0 0 4px 4px; overflow: hidden; }
.np-btns b { width: 27px; height: 19px; display: flex; align-items: center; justify-content: center; border-right: 1px solid #aab0b7; background: linear-gradient(#969da4 45%, #4a535d 50%, #6d7680); }
.np-btns i { width: 11px; height: 4px; background: #fff; margin-top: 5px; }
.np-btns .close { width: 46px; border: 0; background: linear-gradient(#dc9a8d 0, #ce6554 45%, #a92f1d 50%, #cc5946); }
.np-inner { height: 258px; border: 1px solid #9fb1c4; background: #fff; }
.np-menu { height: 22px; display: flex; gap: 14px; padding: 2px 0 0 6px; background: linear-gradient(#fdfdff, #eceffa 35%, #d5daed 50%, #dce1f1); border-bottom: 1px solid #a4b1bd; color: #2c2d3c; letter-spacing: -0.2px; }
.np-body { display: flex; }
.np-text { font-family: "Comic Sans MS", "Comic Neue", "Open Sans", sans-serif; font-size: 41px; letter-spacing: 0; fill: #0b0b0b; stroke: #0b0b0b; stroke-width: .9px; stroke-linejoin: round; }
.np-text path { stroke-width: 1px; }
.np-scroll { flex: 1; height: 234px; background: #ededed; display: flex; flex-direction: column; align-items: center; justify-content: space-between; padding: 6px 0; }
.np-scroll i { border-left-width: 3px; border-right-width: 3px; }
.np-scroll .up { border-bottom-color: #888; }
.np-scroll .down { border-top-color: #888; }

/* layout tabs and command line */
.layouts { flex: none; height: 21px; background: #efeff0; border-bottom: 3px solid #6c6c6c; }
.layouts text { font: 11.500px "Liberation Sans", sans-serif; letter-spacing: -0.4px; fill: #333; text-anchor: middle; }
.layouts .lm { fill: #eee; }
.command { flex: none; height: 59px; background: #fff; font: 13px/16px "Liberation Mono", monospace; letter-spacing: 0; color: #444; white-space: pre; }
.command p { margin-left: -2px; }
.history { height: 41px; padding-top: 1px; border-bottom: 2px solid #ddd; }
.prompt { height: 18px; display: flex; justify-content: space-between; padding-top: 1px; }
.prompt p { padding-top: 1px; }
.hscroll { width: 48px; height: 17px; background: #eee; display: flex; align-items: center; gap: 9px; padding-left: 8px; }
.hscroll b { width: 15px; height: 15px; border: 1px solid #aaa; background: linear-gradient(#fafafa, #ccc); }

/* status bar */
.status { flex: none; height: 21px; display: flex; background: linear-gradient(#8d8d8d, #747474); border-top: 1px solid #666; color: #222; font-family: "Liberation Sans", sans-serif; white-space: nowrap; }
.readout { width: 129px; padding: 3px 0 0 3px; letter-spacing: -0.08px; background: linear-gradient(#848484, #959595); }
.toggles { display: flex; }
.toggles span, .status-right span { width: 21.700px; display: flex; align-items: center; justify-content: center; background: linear-gradient(#c6c6c6, #aaa); border: 1px solid #858585; border-left-color: #ddd; }
.toggles .lit { background: linear-gradient(#d8f1f8, #91c7d8); border-color: #72a7bb; }
.status-right { margin-left: auto; display: flex; }
.status-right .model { width: 43px; letter-spacing: -0.5px; }
.status-right .s21 { width: 21px; } .status-right .s22 { width: 22px; }
.dark13 { width: 13px; background: #777; } .dark8 { width: 8px; background: #777; }
.status-right .scale { width: 50px; gap: 1px; font-size: 12px; }
.status-right .bulb { width: 30px; padding-right: 4px; background: #9b9b91; }
```
